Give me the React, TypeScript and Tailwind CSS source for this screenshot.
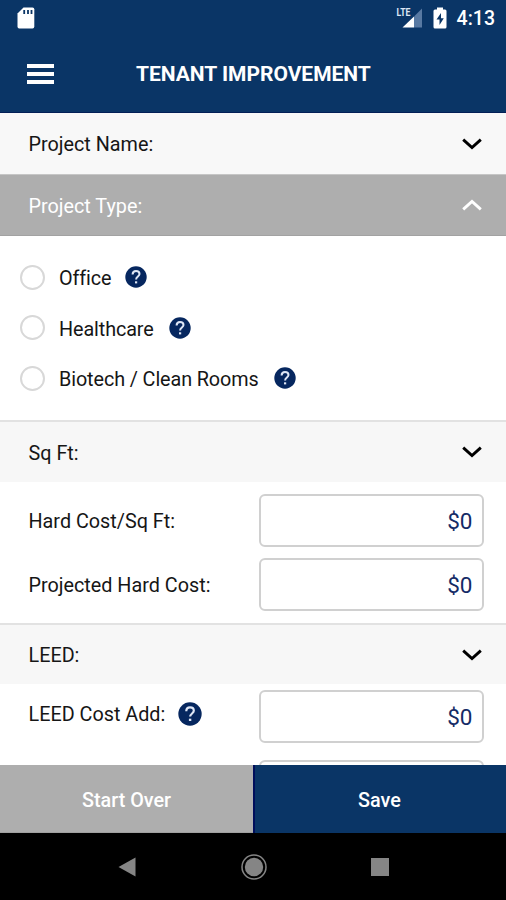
import React from "react";

function Chevron({ up = false, className = "" }: { up?: boolean; className?: string }) {
  return (
    <svg width="20" height="12" viewBox="0 0 20 12" fill="none" className={className}>
      <path d={up ? "M1.2 10.4 L10 2.4 L18.8 10.4" : "M1.2 1.6 L10 9.6 L18.8 1.6"} stroke="currentColor" strokeWidth="2.9" />
    </svg>
  );
}

function Help({ size = 22 }: { size?: number }) {
  return (
    <svg width={size} height={size} viewBox="0 0 22 22" className="shrink-0" fill="none">
      <circle cx="11" cy="11" r="10.7" fill="#06275f" />
      <path
        d="M7.6 8.5C7.6 6.3 9 5 11 5C13.1 5 14.5 6.3 14.5 8.1C14.5 10.4 11.1 10.7 11.1 13.4"
        stroke="#dfe7f6"
        strokeWidth="2"
      />
      <rect x="10" y="15.3" width="2.2" height="2.1" fill="#dfe7f6" />
    </svg>
  );
}

function Section({ label, size }: { label: string; size: string }) {
  return (
    <div className={`flex items-center justify-between border-t-2 border-[#e2e2e2] bg-[#f7f7f7] pr-[24.5px] pl-[28.5px] ${size}`}>
      <span className="pt-[3px]">{label}</span>
      <Chevron className="text-black" />
    </div>
  );
}

function Option({ label, gap }: { label: string; gap: string }) {
  return (
    <div className="flex h-[50.5px] items-center">
      <span className="size-[25px] shrink-0 rounded-full border-[2.5px] border-[#d8d8d8]" />
      <span className={`ml-3.5 pt-1 tracking-[-0.1px] whitespace-nowrap ${gap}`}>{label}</span>
      <Help />
    </div>
  );
}

function Amount({ value }: { value?: string }) {
  return (
    <div className="flex h-[53px] w-[225px] shrink-0 items-center justify-end rounded-[6px] border-2 border-[#d0d0d0] bg-white pr-[9.5px] text-[22.5px] text-[#142b66]">
      {value}
    </div>
  );
}

export default function App() {
  return (
    <div className="flex h-[900px] w-[506px] flex-col overflow-hidden bg-white font-['Roboto',sans-serif] text-[19.8px] leading-6 text-[#161616]">
      <header className="flex h-[113px] shrink-0 flex-col border-b border-[#031f56] bg-[#0a3566] text-white">
        <div className="flex h-9 items-center justify-between pr-[11px] pl-[17px]">
          <svg width="18" height="22" viewBox="0 0 18 22">
            <path d="M6.5 0.5H15.5Q17.3 0.5 17.3 2.3V19.5Q17.3 21.5 15.5 21.5H2.2Q0.5 21.5 0.5 19.5V6.5Z" fill="white" />
            <path d="M7.2 3V7M11 3V7M14.5 3V7" stroke="#0a3566" strokeWidth="1.8" />
          </svg>
          <div className="flex items-center">
            <svg width="27" height="22" viewBox="0 0 27 22" className="overflow-visible">
              <path d="M26 1.5V20.5H18V9.5Z" fill="#5879a2" />
              <path d="M18 9.5V20.5H6.5Z" fill="white" />
              <text x="0.5" y="9" fontSize="11" fontWeight="700" textLength="14" lengthAdjust="spacingAndGlyphs" fill="#dce6f4">LTE</text>
            </svg>
            <svg width="14" height="22" viewBox="0 0 14 22" className="ml-[10px]">
              <path d="M4 0.5H10V2.5H12Q13.5 2.5 13.5 4V20Q13.5 21.5 12 21.5H2Q0.5 21.5 0.5 20V4Q0.5 2.5 2 2.5H4Z" fill="white" />
              <path d="M8 6L3.5 12.6H6.5V18L10.8 11.2H8Z" fill="#0a3566" />
            </svg>
            <span className="ml-[10px] pt-0.5 text-[19.5px] font-medium">4:13</span>
          </div>
        </div>
        <div className="flex h-[76px] items-center pl-[27px]">
          <div className="flex w-[27px] flex-col gap-[3.7px]">
            <i className="h-[4px] bg-white" />
            <i className="h-[4px] bg-white" />
            <i className="h-[4px] bg-white" />
          </div>
          <h1 className="ml-[82px] text-[21px] font-bold tracking-[-0.02px] whitespace-nowrap">TENANT IMPROVEMENT</h1>
        </div>
      </header>

      <main className="flex min-h-0 flex-1 flex-col overflow-hidden *:shrink-0">
        <div className="flex h-[61px] items-center justify-between bg-[#f8f8f8] pr-[24.5px] pl-[28.5px]">
          <span className="pt-[3px]">Project Name:</span>
          <Chevron className="text-black" />
        </div>
        <div className="flex h-[62px] items-center justify-between border-y border-t-[#c6c6c6] border-b-[#a2a2a2] bg-[#aeaeae] pr-[24.5px] pl-[28.5px] text-white">
          <span className="pt-[3px]">Project Type:</span>
          <Chevron up />
        </div>
        <div className="h-[184px] pt-4 pl-5">
          <Option label="Office" gap="mr-[14px]" />
          <Option label="Healthcare" gap="mr-[15px]" />
          <Option label="Biotech / Clean Rooms" gap="mr-[15px]" />
        </div>
        <Section label="Sq Ft:" size="h-[62px]" />
        <div className="flex h-[141px] flex-col gap-[11px] pt-[12px] pr-[22px] pl-[28.5px]">
          <div className="flex items-center justify-between">
            <span className="pt-0.5">Hard Cost/Sq Ft:</span>
            <Amount value="$0" />
          </div>
          <div className="flex items-center justify-between">
            <span className="pt-0.5">Projected Hard Cost:</span>
            <Amount value="$0" />
          </div>
        </div>
        <Section label="LEED:" size="h-[61px]" />
        <div className="flex flex-col gap-[17px] pt-[6px] pr-[22px] pl-[28.5px]">
          <div className="flex items-center justify-between">
            <div className="mb-1.5 flex items-center gap-[13px]">
              <span className="pt-0.5">LEED Cost Add:</span>
              <Help size={24} />
            </div>
            <Amount value="$0" />
          </div>
          <div className="flex justify-end">
            <Amount />
          </div>
        </div>
      </main>

      <div className="flex h-[68px] shrink-0 font-medium text-white">
        <button className="w-[253px] border-b border-[#a0a0a0] bg-[#aeaeae] pt-1">Start Over</button>
        <button className="w-[253px] border-l-2 border-[#000e5c] bg-[#0a3566] pt-[3px] pr-0.5">Save</button>
      </div>
      <nav className="flex h-[67px] shrink-0 items-center justify-between bg-black pr-[117px] pl-[118px]">
        <svg width="18" height="20" viewBox="0 0 18 20">
          <path d="M0.5 10L17.5 0.5V19.5Z" fill="#858585" />
        </svg>
        <svg width="26" height="26" viewBox="0 0 26 26">
          <circle cx="13" cy="13" r="12" fill="none" stroke="#858585" strokeWidth="1.5" />
          <circle cx="13" cy="13" r="9.2" fill="#858585" />
        </svg>
        <i className="size-[18px] bg-[#858585]" />
      </nav>
    </div>
  );
}
